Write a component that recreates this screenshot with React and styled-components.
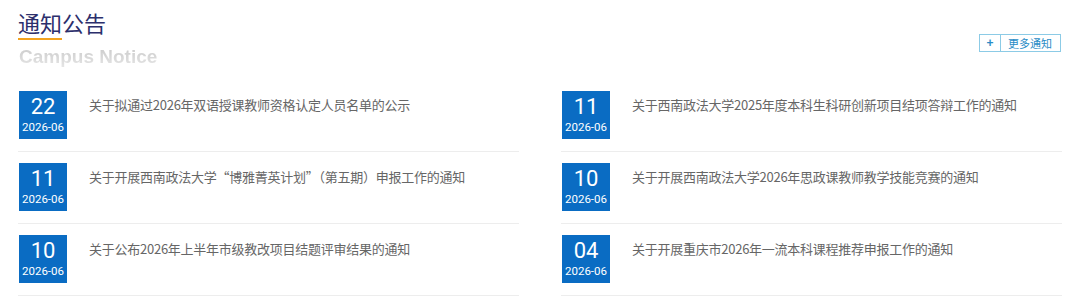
import React from 'react';
import styled, { createGlobalStyle } from 'styled-components';

const GlobalStyle = createGlobalStyle`
  html, body {
    margin: 0;
    padding: 0;
    background: #fff;
  }
  body {
    font-family: "Noto Sans CJK SC", "Noto Sans", sans-serif;
  }
`;

const Section = styled.section`
  width: 1080px;
  height: 304px;
  box-sizing: border-box;
  padding: 7px 18px 0 18px;
  overflow: hidden;
`;

const Header = styled.div`
  display: flex;
  justify-content: space-between;
  align-items: flex-start;
`;

const TitleBlock = styled.div`
  display: flex;
  flex-direction: column;
  align-items: flex-start;
`;

const Title = styled.h2`
  margin: 0;
  font-size: 22px;
  line-height: 30px;
  font-weight: 400;
  color: #2c2f6c;
  font-family: "Noto Sans CJK SC", sans-serif;
`;

const TitleBar = styled.span`
  display: block;
  width: 44px;
  height: 2px;
  margin-top: 1px;
  background: #f3a21e;
`;

const Subtitle = styled.div`
  margin-top: 6px;
  margin-left: 1px;
  font-family: "Liberation Sans", Arial, sans-serif;
  font-weight: 700;
  font-size: 19px;
  line-height: 22px;
  background: linear-gradient(180deg, #cacaca 0%, #e6e6e6 100%);
  -webkit-background-clip: text;
  background-clip: text;
  color: transparent;
`;

const MoreButton = styled.a`
  display: flex;
  align-items: stretch;
  margin-top: 27px;
  margin-right: 1px;
  height: 18px;
  border: 1px solid #8ccbe6;
  box-sizing: border-box;
  color: #2a8cc6;
  text-decoration: none;
  font-size: 11px;
  cursor: pointer;
`;

const Plus = styled.span`
  width: 20px;
  display: flex;
  align-items: center;
  justify-content: center;
  border-right: 1px solid #8ccbe6;
  font-family: "Liberation Sans", Arial, sans-serif;
  font-weight: 700;
  font-size: 12px;
`;

const MoreText = styled.span`
  display: flex;
  align-items: center;
  padding: 0 8px 0 7px;
  line-height: 16px;
`;

const Grid = styled.ul`
  list-style: none;
  margin: 0;
  padding: 0;
  display: grid;
  grid-template-columns: 1fr 1fr;
  column-gap: 42px;
  margin-top: 12px;
`;

const Item = styled.li`
  display: flex;
  align-items: flex-start;
  padding: 11px 0 12px 1px;
  border-bottom: 1px solid #ededed;
`;

const DateBox = styled.div`
  flex: none;
  width: 48px;
  height: 48px;
  padding-top: 3px;
  box-sizing: border-box;
  background: #0a6cc3;
  color: #fff;
  display: flex;
  flex-direction: column;
  align-items: center;
  font-family: Roboto, "Noto Sans", sans-serif;
`;

const Day = styled.span`
  font-size: 22px;
  line-height: 26px;
`;

const Month = styled.span`
  font-size: 11.5px;
  line-height: 14px;
`;

const ItemTitle = styled.a`
  margin-left: 22px;
  margin-top: 5px;
  font-size: 13px;
  line-height: 18px;
  letter-spacing: -0.25px;
  color: #666;
  text-decoration: none;
  white-space: nowrap;
`;

const notices = [
  { day: '22', month: '2026-06', title: '关于拟通过2026年双语授课教师资格认定人员名单的公示' },
  { day: '11', month: '2026-06', title: '关于西南政法大学2025年度本科生科研创新项目结项答辩工作的通知' },
  { day: '11', month: '2026-06', title: '关于开展西南政法大学“博雅菁英计划”（第五期）申报工作的通知' },
  { day: '10', month: '2026-06', title: '关于开展西南政法大学2026年思政课教师教学技能竞赛的通知' },
  { day: '10', month: '2026-06', title: '关于公布2026年上半年市级教改项目结题评审结果的通知' },
  { day: '04', month: '2026-06', title: '关于开展重庆市2026年一流本科课程推荐申报工作的通知' },
];

const App = () => {
  return (
    <>
      <GlobalStyle />
      <Section>
        <Header>
          <TitleBlock>
            <Title>通知公告</Title>
            <TitleBar />
            <Subtitle>Campus Notice</Subtitle>
          </TitleBlock>
          <MoreButton>
            <Plus>+</Plus>
            <MoreText>更多通知</MoreText>
          </MoreButton>
        </Header>
        <Grid>
          {notices.map((n, i) => (
            <Item key={i}>
              <DateBox>
                <Day>{n.day}</Day>
                <Month>{n.month}</Month>
              </DateBox>
              <ItemTitle>{n.title}</ItemTitle>
            </Item>
          ))}
        </Grid>
      </Section>
    </>
  );
};

export default App;
